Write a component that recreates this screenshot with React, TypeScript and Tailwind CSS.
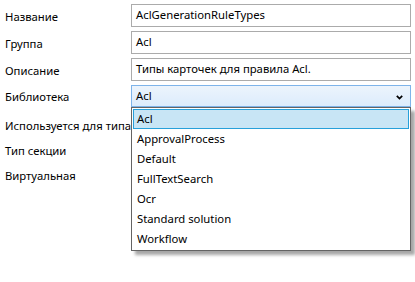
import React from 'react';

const font = { fontFamily: '"Noto Sans", "Open Sans", sans-serif' };

const libraries = ['Acl', 'ApprovalProcess', 'Default', 'FullTextSearch', 'Ocr', 'Standard solution', 'Workflow'];

const TextRow: React.FC<{ label: string; value: string }> = ({ label, value }) => (
  <div className="flex h-[23px] items-center">
    <div className="w-[131px] shrink-0 pl-[5px] pt-[3px]">{label}</div>
    <div className="flex h-full flex-1 items-center border border-[#ababab] bg-white pl-[4px]">{value}</div>
  </div>
);

const LabelRow: React.FC<{ label: string }> = ({ label }) => (
  <div className="flex h-[25px] items-center pl-[5px] pt-[2px]">{label}</div>
);

const App: React.FC = () => {
  return (
    <div className="relative h-[282px] w-[415px] bg-white pt-[4px] pr-[4px] text-[11.3px] text-black" style={font}>
      <div className="flex flex-col gap-[4px]">
        <TextRow label="Название" value="AclGenerationRuleTypes" />
        <TextRow label="Группа" value="Acl" />
        <TextRow label="Описание" value="Типы карточек для правила Acl." />

        {/* Library combo box, opened */}
        <div className="flex h-[22px] items-center">
          <div className="w-[131px] shrink-0 pl-[5px] pt-[3px]">Библиотека</div>
          <div className="relative flex h-full flex-1 items-center border border-[#7eb4ea] bg-gradient-to-b from-[#ecf4fc] to-[#dcecfc] pl-[4px]">
            Acl
            <svg className="absolute right-[7px] top-[9px]" width="7" height="5" viewBox="0 0 7 5">
              <path d="M0.8 0.8 L3.5 3.6 L6.2 0.8" fill="none" stroke="#000" strokeWidth="1.7" />
            </svg>
            <div className="absolute left-[-1px] right-[-1px] top-[21px] z-10 border border-[#646464] bg-white p-px shadow-[4px_4px_3px_rgba(0,0,0,0.35)]">
              {libraries.map((lib, i) => (
                <div
                  key={lib}
                  className={
                    i === 0
                      ? 'flex h-[20px] items-center border border-[#26a0da] bg-[#c8e5f5] pl-[3px]'
                      : 'flex h-[20px] items-center border border-transparent pl-[3px]'
                  }
                >
                  {lib}
                </div>
              ))}
            </div>
          </div>
        </div>
      </div>

      <div className="mt-[6px]">
        <LabelRow label="Используется для типа" />
        <LabelRow label="Тип секции" />
        <LabelRow label="Виртуальная" />
      </div>
    </div>
  );
};

export default App;
